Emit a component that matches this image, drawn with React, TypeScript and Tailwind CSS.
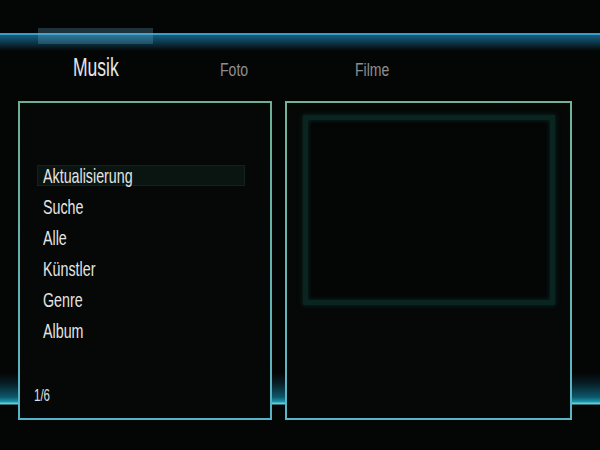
const menu = ["Aktualisierung", "Suche", "Alle", "Künstler", "Genre", "Album"];

function Narrow({ children, className = "" }: { children: React.ReactNode; className?: string }) {
  return (
    <span className={`inline-block origin-left scale-x-[0.7] whitespace-nowrap ${className}`}>
      {children}
    </span>
  );
}

export default function App() {
  const active = 0;

  return (
    <div className="relative h-[450px] w-[600px] overflow-hidden bg-[#040606] font-['Liberation_Sans',Arial,sans-serif]">
      <header className="relative h-[101px]">
        {/* selected tab marker sits over the bar */}
        <div className="absolute left-[38px] top-[28px] h-[16px] w-[115px] bg-[#6ab8d8]/25" />
        <div className="h-[33px]" />
        <div className="h-[2px] bg-[#3a9ccb]" />
        <div className="h-[16px] bg-gradient-to-b from-[#175f82] via-[#0b3446] to-[#040606]" />
        <nav className="mt-[4px] flex items-baseline pl-[73px]">
          <div className="w-[147px] text-[25px] leading-[25px] text-[#e6e6e6]">
            <Narrow>Musik</Narrow>
          </div>
          <div className="w-[135px] text-[18px] leading-[18px] text-[#8e8e8e]">
            <Narrow className="scale-x-[0.78]">Foto</Narrow>
          </div>
          <div className="text-[18px] leading-[18px] text-[#8e8e8e]">
            <Narrow className="scale-x-[0.78]">Filme</Narrow>
          </div>
        </nav>
      </header>

      <section className="flex h-[319px] gap-[13px] bg-[linear-gradient(180deg,transparent_272px,#071c24_282px,#0d5668_296px,#169ab2_301px,#6cc8d6_302px,#6cc8d6_303px,transparent_304px)] pl-[18px]">
        <div className="w-[254px] bg-gradient-to-b from-[#6fae94] to-[#55b4c6] p-[2px]">
          <div className="flex h-full flex-col bg-[#050807]">
            <ul className="pt-[62px]">
              {menu.map((item, i) => (
                <li
                  key={item}
                  className={`mb-[10px] ml-[17px] h-[21px] w-[208px] pl-[6px] text-[21px] leading-[21px] text-[#e4e4e4] ${
                    i === active ? "bg-[#0a1411] shadow-[inset_0_0_0_1px_#13221d]" : ""
                  }`}
                >
                  <Narrow className="scale-x-[0.68]">{item}</Narrow>
                </li>
              ))}
            </ul>
            <div className="mt-auto pb-[14px] pl-[14px] text-[16px] leading-[16px] text-[#e0e0e0]">
              <Narrow className="scale-x-[0.72]">1/6</Narrow>
            </div>
          </div>
        </div>

        <div className="w-[287px] bg-gradient-to-b from-[#74b298] to-[#58b6c8] p-[2px]">
          <div className="h-full bg-[#050807] pl-[16px] pt-[12px]">
            <div className="h-[190px] w-[252px] border-[5px] border-[#0a2520] bg-[#040606] shadow-[0_0_5px_#0a2c28,inset_0_0_4px_#0a2c2c]" />
          </div>
        </div>
      </section>
    </div>
  );
}
